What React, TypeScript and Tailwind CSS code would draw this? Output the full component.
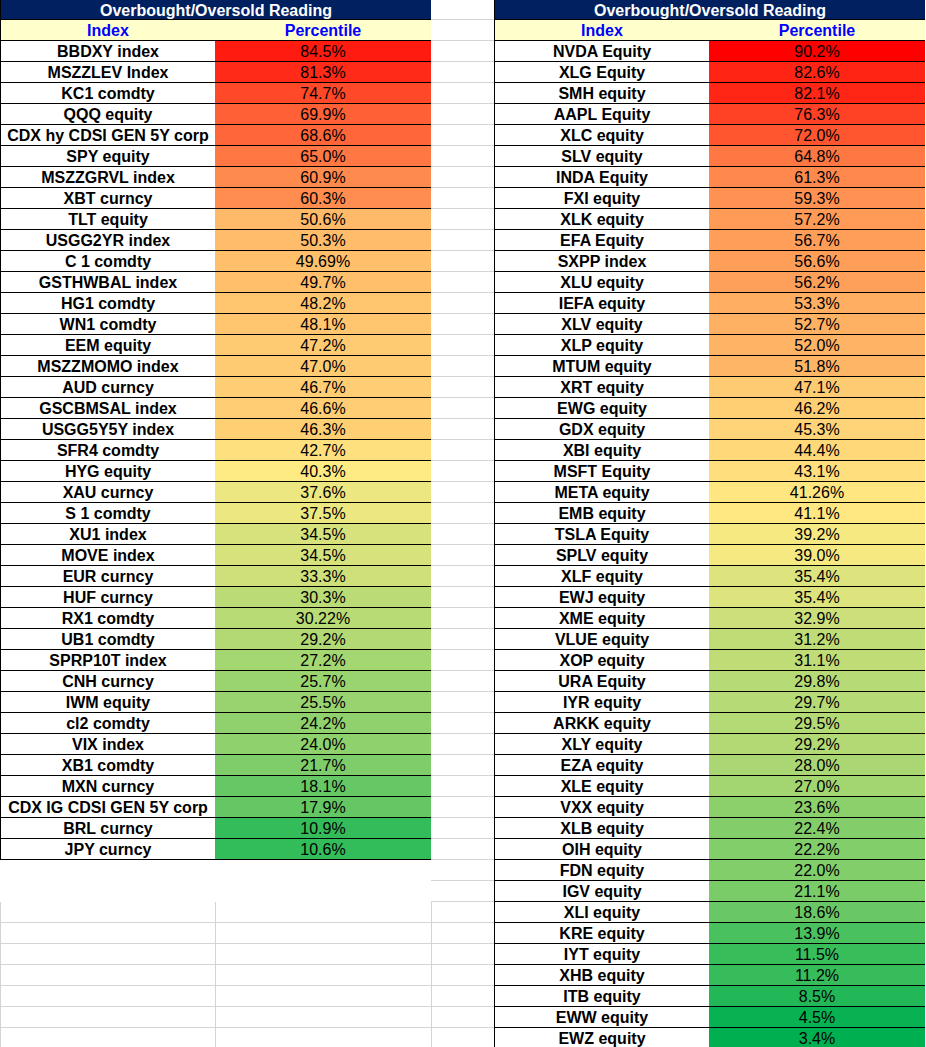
import React from "react";

type Row = [string, string];

const left: Row[] = [
  ["BBDXY index", "84.5%"],
  ["MSZZLEV Index", "81.3%"],
  ["KC1 comdty", "74.7%"],
  ["QQQ equity", "69.9%"],
  ["CDX hy CDSI GEN 5Y corp", "68.6%"],
  ["SPY equity", "65.0%"],
  ["MSZZGRVL index", "60.9%"],
  ["XBT curncy", "60.3%"],
  ["TLT equity", "50.6%"],
  ["USGG2YR index", "50.3%"],
  ["C 1 comdty", "49.69%"],
  ["GSTHWBAL index", "49.7%"],
  ["HG1 comdty", "48.2%"],
  ["WN1 comdty", "48.1%"],
  ["EEM equity", "47.2%"],
  ["MSZZMOMO index", "47.0%"],
  ["AUD curncy", "46.7%"],
  ["GSCBMSAL index", "46.6%"],
  ["USGG5Y5Y index", "46.3%"],
  ["SFR4 comdty", "42.7%"],
  ["HYG equity", "40.3%"],
  ["XAU curncy", "37.6%"],
  ["S 1 comdty", "37.5%"],
  ["XU1 index", "34.5%"],
  ["MOVE index", "34.5%"],
  ["EUR curncy", "33.3%"],
  ["HUF curncy", "30.3%"],
  ["RX1 comdty", "30.22%"],
  ["UB1 comdty", "29.2%"],
  ["SPRP10T index", "27.2%"],
  ["CNH curncy", "25.7%"],
  ["IWM equity", "25.5%"],
  ["cl2 comdty", "24.2%"],
  ["VIX index", "24.0%"],
  ["XB1 comdty", "21.7%"],
  ["MXN curncy", "18.1%"],
  ["CDX IG CDSI GEN 5Y corp", "17.9%"],
  ["BRL curncy", "10.9%"],
  ["JPY curncy", "10.6%"],
];

const right: Row[] = [
  ["NVDA Equity", "90.2%"],
  ["XLG Equity", "82.6%"],
  ["SMH equity", "82.1%"],
  ["AAPL Equity", "76.3%"],
  ["XLC equity", "72.0%"],
  ["SLV equity", "64.8%"],
  ["INDA Equity", "61.3%"],
  ["FXI equity", "59.3%"],
  ["XLK equity", "57.2%"],
  ["EFA Equity", "56.7%"],
  ["SXPP index", "56.6%"],
  ["XLU equity", "56.2%"],
  ["IEFA equity", "53.3%"],
  ["XLV equity", "52.7%"],
  ["XLP equity", "52.0%"],
  ["MTUM equity", "51.8%"],
  ["XRT equity", "47.1%"],
  ["EWG equity", "46.2%"],
  ["GDX equity", "45.3%"],
  ["XBI equity", "44.4%"],
  ["MSFT Equity", "43.1%"],
  ["META equity", "41.26%"],
  ["EMB equity", "41.1%"],
  ["TSLA Equity", "39.2%"],
  ["SPLV equity", "39.0%"],
  ["XLF equity", "35.4%"],
  ["EWJ equity", "35.4%"],
  ["XME equity", "32.9%"],
  ["VLUE equity", "31.2%"],
  ["XOP equity", "31.1%"],
  ["URA Equity", "29.8%"],
  ["IYR equity", "29.7%"],
  ["ARKK equity", "29.5%"],
  ["XLY equity", "29.2%"],
  ["EZA equity", "28.0%"],
  ["XLE equity", "27.0%"],
  ["VXX equity", "23.6%"],
  ["XLB equity", "22.4%"],
  ["OIH equity", "22.2%"],
  ["FDN equity", "22.0%"],
  ["IGV equity", "21.1%"],
  ["XLI equity", "18.6%"],
  ["KRE equity", "13.9%"],
  ["IYT equity", "11.5%"],
  ["XHB equity", "11.2%"],
  ["ITB equity", "8.5%"],
  ["EWW equity", "4.5%"],
  ["EWZ equity", "3.4%"],
];

const MIN = 3.4;
const MID = 40.3;
const MAX = 90.2;
const C_MIN = [0, 176, 80];
const C_MID = [255, 235, 132];
const C_MAX = [255, 0, 0];

function scaleColor(text: string): string {
  const v = parseFloat(text);
  let a: number[], b: number[], t: number;
  if (v <= MID) {
    a = C_MIN;
    b = C_MID;
    t = (v - MIN) / (MID - MIN);
  } else {
    a = C_MID;
    b = C_MAX;
    t = (v - MID) / (MAX - MID);
  }
  t = Math.max(0, Math.min(1, t));
  const c = a.map((x, i) => Math.round(x + (b[i] - x) * t));
  return `rgb(${c[0]}, ${c[1]}, ${c[2]})`;
}

function Table({ rows }: { rows: Row[] }) {
  return (
    <div className="flex flex-col border-l border-black w-[431px] shrink-0">
      <div className="h-[20px] shrink-0 bg-[#002060] border-b border-black text-white font-bold text-center leading-[20px] pt-[1px] whitespace-nowrap overflow-hidden">
        Overbought/Oversold Reading
      </div>
      <div className="h-[21px] shrink-0 flex bg-[#ffffcc] border-b border-black text-[#0000ff] font-bold leading-[20px] whitespace-nowrap">
        <div className="w-[214px] text-center pt-[1px]">Index</div>
        <div className="flex-1 text-center pt-[1px]">Percentile</div>
      </div>
      {rows.map(([name, val], i) => (
        <div
          key={i}
          className="h-[21px] shrink-0 flex border-b border-black leading-[20px] whitespace-nowrap"
        >
          <div className="w-[214px] bg-white text-center font-bold text-black pt-[1px] overflow-hidden">
            {name}
          </div>
          <div
            className="flex-1 text-center text-black pt-[1px] overflow-hidden"
            style={{ backgroundColor: scaleColor(val) }}
          >
            {val}
          </div>
        </div>
      ))}
    </div>
  );
}

export default function App() {
  const gapRows = Array.from({ length: 50 }, (_, k) => k);
  const blankRows = Array.from({ length: 7 }, (_, k) => k);
  return (
    <div className="h-[1047px] w-[926px] overflow-hidden bg-white flex items-start font-['Liberation_Sans',Arial,sans-serif] text-[16px]">
      <div className="w-[431px] shrink-0 flex flex-col">
        <Table rows={left} />
        <div className="h-[42px] shrink-0 bg-white" />
        {blankRows.map((k) => (
          <div key={k} className="h-[21px] shrink-0 flex border-b border-[#d4d4d4]">
            <div className="w-[215px] border-l border-[#d4d4d4]" />
            <div className="w-[216px] border-l border-[#d4d4d4]" />
          </div>
        ))}
      </div>
      <div className="w-[63px] shrink-0 flex flex-col">
        {gapRows.map((k) =>
          k === 0 ? (
            <div key={k} className="h-[20px] shrink-0 border-b border-[#d4d4d4]" />
          ) : k >= 43 ? (
            <div
              key={k}
              className="h-[21px] shrink-0 border-b border-l border-[#d4d4d4]"
            />
          ) : (
            <div key={k} className="h-[21px] shrink-0 border-b border-[#d4d4d4]" />
          )
        )}
      </div>
      <Table rows={right} />
      <div className="w-[1px] shrink-0" />
    </div>
  );
}
